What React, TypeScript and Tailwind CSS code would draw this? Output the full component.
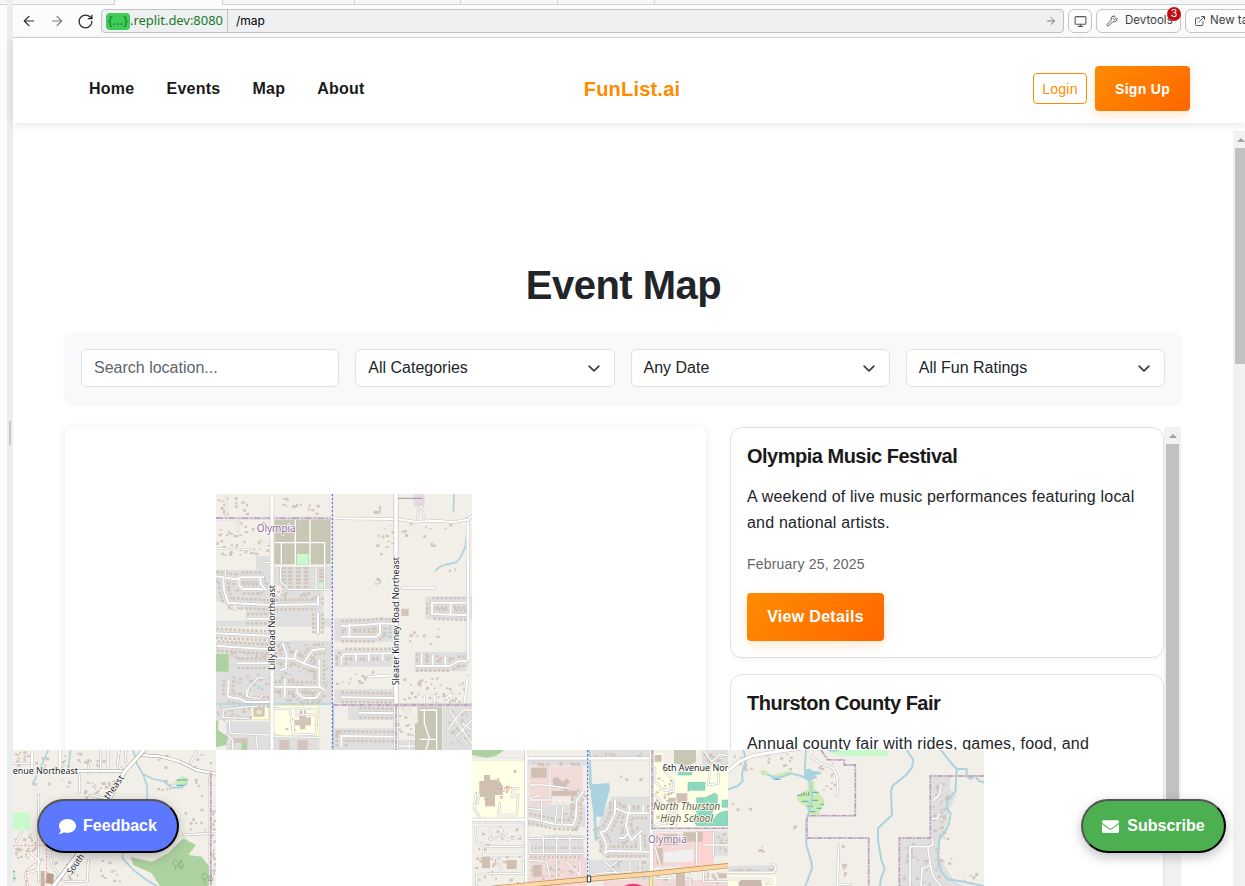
import React from "react";
import { FaComment, FaEnvelope } from "react-icons/fa";
import { ArrowLeft, ArrowRight, ExternalLink, Monitor, RotateCw, Wrench } from "lucide-react";

/* ---------- map drawing helpers ---------- */

const LAND = "#f2efe9";
const RES = "#dfdfdf";
const HOUSE = "#d3c5ba";
const WATER = "#aad3df";

function scatter(x: number, y: number, w: number, h: number, n: number, seed: number) {
  let s = seed * 7919 + 13;
  const rnd = () => {
    s = (s * 1103515245 + 12345) % 2147483648;
    return s / 2147483648;
  };
  let d = "";
  for (let i = 0; i < n; i++) {
    const px = Math.round(x + rnd() * w);
    const py = Math.round(y + rnd() * h);
    const bw = Math.round(4 + rnd() * 6);
    const bh = Math.round(4 + rnd() * 5);
    d += `M${px} ${py}h${bw}v${bh}h-${bw}z`;
  }
  return d;
}

type Box = [number, number, number, number, number];

function Houses({ areas, fill = HOUSE }: { areas: Box[]; fill?: string }) {
  return <path fill={fill} d={areas.map((a, i) => scatter(a[0], a[1], a[2], a[3], a[4], i + 3)).join("")} />;
}

/* A row of houses on each side of the given streets. */
function HouseRows({ d, bg = RES }: { d: string; bg?: string }) {
  return (
    <g fill="none">
      <path d={d} stroke={HOUSE} strokeWidth="36" strokeDasharray="8 5" />
      <path d={d} stroke={bg} strokeWidth="20" strokeLinejoin="round" />
    </g>
  );
}

function Roads({ d, w = 6, edge = "#c4c1be" }: { d: string; w?: number; edge?: string }) {
  return (
    <g fill="none" strokeLinejoin="round" strokeLinecap="round">
      <path d={d} stroke={edge} strokeWidth={w + 3} />
      <path d={d} stroke="#fff" strokeWidth={w} />
    </g>
  );
}

function Border({ d, dash = "14 4 4 4" }: { d: string; dash?: string }) {
  return (
    <g fill="none">
      <path d={d} stroke="#dfd0de" strokeWidth="6" />
      <path d={d} stroke="#b79bb8" strokeWidth="4" strokeDasharray={dash} />
    </g>
  );
}

function BlueDots({ d }: { d: string }) {
  return <path d={d} fill="none" stroke="#5757e6" strokeWidth="3" strokeDasharray="7 5" />;
}

function River({ d, w = 5 }: { d: string; w?: number }) {
  return <path d={d} fill="none" stroke={WATER} strokeWidth={w} strokeLinejoin="round" strokeLinecap="round" />;
}

const label = "[font-family:'Noto_Sans','Open_Sans',sans-serif]";

/* ---------- map tiles ---------- */

function TileNorth() {
  const streets =
    "M0 259L22 262L60 268L72 262L142 262M22 262L24 300L36 338L160 345L300 343M68 264V286L80 297H136L140 300M132 264L136 285L150 300M56 340V358M92 386H160M306 322V346M306 370V430M0 430L120 436L165 438M4 468L165 478M64 520L165 520M176 504L234 506L262 520L310 535M234 506L242 480M262 520L290 480L325 476M310 510V590L325 600M176 590L310 592M206 568V622M244 592V610L262 624L300 624L312 608M200 460L212 495L210 535L195 540M38 570L36 620L70 626L90 636H160";
  const east =
    "M376 407L440 405L500 400L532 402M400 402V440M376 440L480 440L492 430V405M376 525V505L385 491L532 490M420 492V512M458 492V512M500 492V512M376 622L535 624M430 668L535 670M376 770V738L535 740M600 528L700 528L725 514L755 514M617 490V528M650 496V528M688 502V528M648 338L755 338M648 338V372L755 376M704 340V374";
  const lanes = "M458 560L535 556M557 295L655 295M625 620V640M655 616V640M690 625L705 612V625M745 640L755 560";
  return (
    <svg viewBox="0 12 768 768" className="absolute left-[151px] top-[67px] h-[256px] w-[256px]">
      <rect y="12" width="768" height="768" fill={LAND} />
      <path
        fill={RES}
        d="M0 240H120V198H165V240L175 228H348V300H322V385H348V640H0V545H38V492H0V455H160V410H0V362H90V335H0ZM356 385H530V455H356ZM356 478H530V530H356ZM356 598H532V640H356ZM396 648H535V690H396ZM356 715H532V780H356ZM597 486H752V543H597ZM628 320H768V388H628ZM680 652H768V780H680ZM540 750H600V780H540ZM0 645H165V690H0ZM30 695H165V780H30ZM170 738H310V780H170Z"
      />
      <path fill={LAND} d="M172 410H345V452H172ZM0 362H90V392H0ZM180 285L200 290V318H178Z" />
      <path fill="#c8c7b4" d="M175 86H344V222H175ZM605 652H678V780H597V700H605Z" />
      <path fill="#c8facc" d="M242 192H278V224H242ZM200 280l14 0v12h-14zM308 281h14v12h-14z" />
      <path fill="#aed1a0" d="M0 492H38V545H0ZM0 690L8 692L6 720L36 740L30 765L0 772ZM76 750H94V780H76Z" />
      <path fill="#ffffe5" stroke="#f1eca8" strokeWidth="3" d="M106 646H158V688H106ZM172 646H310V738H200L172 728Z" />
      <path fill="#e6d9e6" d="M592 12H626V50H592Z" />
      <HouseRows d={streets} />
      <HouseRows d={east} />
      <Houses
        areas={[
          [0, 20, 100, 56, 16], [0, 95, 155, 100, 44], [185, 20, 120, 52, 14], [472, 48, 30, 24, 6], [478, 90, 60, 110, 14],
          [555, 90, 160, 50, 9], [640, 155, 14, 20, 3], [470, 255, 30, 30, 4], [560, 560, 190, 80, 48], [545, 660, 45, 80, 10],
          [356, 535, 130, 50, 12], [550, 400, 120, 70, 9], [690, 200, 60, 60, 3], [200, 700, 100, 20, 3],
          [180, 455, 160, 185, 45], [10, 480, 150, 30, 22], [45, 545, 115, 60, 20], [0, 645, 100, 45, 18], [690, 655, 75, 115, 26],
          [170, 300, 150, 20, 16],
        ]}
      />
      <path
        d="M204 232V296M222 232V296M247 232V296M270 232V296M316 236V280"
        stroke={HOUSE}
        strokeWidth="14"
        strokeDasharray="7 4"
        fill="none"
      />
      <path fill={HOUSE} d="M112 652H146V680H112ZM236 690H250V662H270V682H285V706H268V718H252V706H236ZM556 356H578V378H556ZM190 750H220V780H190ZM245 750H275V780H245ZM48 745H95V758H48Z" />
      <path fill="#eee6c9" d="M122 660H136V672H122Z" />
      <River d="M714 14L712 66" />
      <River d="M752 130L748 170L735 200L722 217L690 223L672 230L659 242" />
      <River d="M0 642H350M352 642V780" />
      <path d="M514 428h14M514 440h14M520 405h8" stroke={WATER} strokeWidth="5" />
      <path fill="#bfe3d2" d="M122 585h12v10h-12z" />
      <Roads d={streets} w={6} />
      <Roads d={east} w={6} />
      <Roads d={lanes} w={6} />
      <Roads
        w={4}
        d="M196 160V225M238 86V226M282 86V226M176 158H326V298M176 228H326M194 230V275L218 298H345M300 232V296M30 20V82M66 88V124M0 176L104 178M135 162H165M140 218H165M28 270V242M120 650L95 650L24 658L20 682L100 686M40 690L42 730L160 735M176 655L222 658L232 735M232 690V735L300 732L304 658L236 656M240 658V676L300 672M262 658V672M35 735L50 750V780M120 738L125 780M170 740L310 742M603 84L606 60L615 46L625 84M700 660L725 700L768 760M720 740L768 690M695 720L740 660H768M740 700L768 720M612 660H662V780M612 748H662M625 662V700L640 745L630 780M560 655L575 668L582 658M545 768H595M580 755V780M90 620L100 590L125 565L148 562M90 590L95 620L130 626L140 615"
      />
      <Roads d="M755 86V200L757 330V510" w={7} />
      <path d="M537 25H620" stroke="#999" strokeWidth="3" />
      <Roads d="M0 86L345 85L440 86L540 87L600 95L665 92L710 97L755 89L768 78" w={6} />
      <Border d="M0 84L345 85" dash="20 8 4 6" />
      <Roads d="M168 12V780" w={10} />
      <Roads d="M540 12V780" w={11} edge="#b5b2b0" />
      <Roads d="M540 645H768" w={7} />
      <Border d="M352 645H768" />
      <Border d="M540 645V780" />
      <BlueDots d="M349 12V780" />
      <g className={label} stroke="#fff" strokeWidth="5" paintOrder="stroke" strokeLinejoin="round">
        <text x="122" y="127" fontSize="31" fill="#8d6a91" textLength="117" lengthAdjust="spacingAndGlyphs">Olympia</text>
        <g fill="#222">
          <text transform="translate(177 540) rotate(-90)" fontSize="27" textLength="255" lengthAdjust="spacingAndGlyphs">Lilly Road Northeast</text>
          <text transform="translate(550 586) rotate(-90)" fontSize="27" textLength="385" lengthAdjust="spacingAndGlyphs">Sleater Kinney Road Northeast</text>
        </g>
      </g>
    </svg>
  );
}

function TileWest() {
  return (
    <svg viewBox="39 15 609 408" preserveAspectRatio="none" className="h-[136px] w-[203px] shrink-0">
      <rect x="39" y="15" width="609" height="408" fill={LAND} />
      <path fill="#c8facc" d="M39 202H90V255H39Z" />
      <path fill="#aed1a0" d="M392 336L455 350L505 325L550 280L588 300L565 330L605 335L635 375L625 423H480L455 385L400 360Z" />
      <path fill="#cdebb0" d="M525 108L545 94L563 98L562 118L545 130L528 122ZM39 372L46 380V405L39 412Z" />
      <path d="M530 105h14M545 105h18M530 121h22M39 380h6M39 400h8" stroke="#4ba3e0" strokeWidth="3" />
      <Houses
        areas={[
          [42, 18, 50, 50, 12], [105, 18, 100, 52, 15], [220, 18, 90, 60, 14], [42, 265, 90, 75, 34], [40, 95, 200, 45, 5],
          [250, 95, 60, 70, 14], [440, 20, 190, 45, 10], [470, 85, 60, 60, 7], [570, 85, 60, 90, 6], [300, 330, 60, 85, 10],
          [150, 330, 100, 85, 16], [545, 190, 95, 85, 12], [635, 180, 10, 230, 16], [280, 100, 60, 60, 10],
        ]}
      />
      <path fill="#b79d8a" d="M140 383L162 388L158 418L136 413Z" />
      <path fill="#c7b3a5" d="M122 378H134V423H122Z" />
      <River d="M145 15L125 60L98 118" />
      <River d="M212 15L206 60L200 78" />
      <River d="M400 15L410 55L430 90L442 125L441 180M430 88L460 102L490 108L515 128L545 128L560 115M368 322V340L400 375L440 405L470 423" />
      <Roads w={5} edge="#b8b5b2" d="M302 15V78M324 15V78M265 60V85M358 15L352 60L370 78M378 15L376 50M239 90V142M39 55H95M590 20L568 60M550 270L625 265M116 150V410M92 322L118 350L112 375L75 385L82 423M150 320L155 360L185 400M265 345L262 408L195 410M50 290L65 262M270 150L320 160" />
      <Roads d="M96 15V80M180 15V80" w={8} />
      <Roads d="M39 78L370 78" w={8} edge="#a9a6a3" />
      <Roads d="M420 30L480 34L535 48L590 75L648 86" w={7} edge="#9b9895" />
      <Roads d="M432 15L372 82L240 320L160 423" w={10} edge="#9b9895" />
      <Roads d="M636 180H648M636 260H648M636 370H648M630 85V423" w={5} />
      <path d="M39 302H140V420M80 423L78 375L112 350" fill="none" stroke="#f0a49b" strokeWidth="3" strokeDasharray="7 4" />
      <Border d="M632 85V423" />
      <g fill="none" stroke="#86ab79" strokeWidth="2.5">
        <path d="M527 375V362M527 345a8 9 0 1 0 .1 0M543 375V366M543 345l-7 21h14zM614 415V402M614 385a8 9 0 1 0 .1 0M632 415V406M632 387l-7 19h14z" />
      </g>
      <g className={label} fill="#222" stroke="#fff" strokeWidth="5" paintOrder="stroke" strokeLinejoin="round" fontSize="27">
        <text x="38" y="87" textLength="196" lengthAdjust="spacingAndGlyphs">enue Northeast</text>
        <text transform="translate(325 165) rotate(-54)" textLength="82" lengthAdjust="spacingAndGlyphs">theast</text>
        <text transform="translate(214 390) rotate(-54)" textLength="68" lengthAdjust="spacingAndGlyphs">South</text>
      </g>
    </svg>
  );
}

function TileCenter() {
  const res =
    "M404 325L410 300L392 262L410 255L435 205V165M437 190L475 205H535M475 205L468 240L475 265L460 280L448 278M475 265L485 285L505 265L515 258M510 270L512 315M404 325L415 318L535 320M478 180V205M520 180V205M176 220L215 228L255 238L310 240L318 215L320 165L340 140";
  return (
    <svg viewBox="6 15 768 408" className="h-[136px] w-[256px] shrink-0">
      <rect x="6" y="15" width="768" height="408" fill={LAND} />
      <path fill={RES} d="M175 180H345V245H175ZM175 40H352V62H175ZM365 15H540V45H365ZM425 155H540V340H405L388 320V230ZM230 270H340V332H176V290H230ZM695 15H774V60H695ZM350 345H540V390H350ZM730 262H774V332H730ZM480 385H550V423H480Z" />
      <path fill="#f2dad9" d="M178 65H338V132L310 155H245V182H178ZM178 335H350V400H178ZM550 265H680V365H550ZM680 255H730V360H680ZM176 400H350V423H176ZM400 405H774V423H400Z" />
      <path fill="#ffd3d1" d="M552 265H580V360L552 370ZM682 265H730V360H682ZM640 352H690V366H640Z" />
      <path fill="#f0f0f0" d="M582 322L670 312V350H582Z" />
      <path fill="#ffffe5" d="M6 42H162V218H6ZM550 25H580V60L620 95L680 62H774V250H550Z" />
      <path fill="#aed1a0" d="M6 15H102L80 32L50 38L6 30Z" />
      <path fill="#c8c7b4" d="M612 15H678V52L650 62L612 55Z" />
      <path fill="#8dd9c0" stroke="#6cc7a8" strokeWidth="1.5" d="M654 112H705V136H654ZM680 158H705L735 144L742 150V180L725 205L735 242H680L668 225V210H680ZM756 165H774V187H756ZM774 198C745 198 730 215 730 238L735 242H774ZM625 82h40v8h-40z" />
      <path fill={WATER} d="M364 118L418 114L420 130L398 215H372L362 150Z" />
      <HouseRows d={res} />
      <HouseRows d="M180 295H338M180 322H338" />
      <Houses
        areas={[
          [178, 50, 160, 8, 18], [372, 18, 160, 20, 18], [440, 90, 70, 20, 3], [12, 240, 145, 170, 46], [180, 345, 155, 60, 26],
          [555, 60, 50, 180, 22], [400, 345, 130, 50, 20], [595, 130, 60, 50, 12], [700, 22, 70, 32, 14], [560, 370, 110, 40, 14],
          [20, 55, 130, 140, 8], [740, 265, 32, 60, 14], [700, 380, 70, 35, 10], [280, 170, 40, 50, 8],
        ]}
      />
      <path
        fill="#d0bfb3"
        d="M28 108H42V90H60V104H86L98 122V150H75V184H45V156H28ZM184 68H230V98H184ZM248 100L262 96L278 112L290 100L300 110L288 122L300 134L285 140L270 124L250 130ZM245 138H322V152H245ZM580 268H622V300H580ZM640 262H698V290H640ZM595 158H618V180H595ZM622 145H652V172H622ZM36 335H60V370H36ZM110 345H140V372H110ZM188 360H215V395H188ZM560 310H578V358H560ZM618 385H645V423H618ZM554 30H575V50H554ZM745 385H770V400H745Z"
      />
      <path d="M94 132L125 124M100 140L125 128M562 145L576 125" stroke="#e8705f" strokeWidth="3" strokeDasharray="4 4" fill="none" />
      <River d="M358 15L362 130M374 210L378 284" w={8} />
      <Roads d={res} w={6} />
      <Roads
        w={4}
        d="M6 42H162M18 145L12 190L28 215M28 150L22 175M90 175L85 210H140L145 150L125 155L130 130H145M6 240H160M15 245L20 290L50 305H160M60 240V285L100 270M100 240L110 285L150 275M40 315V330H160M20 388V423M20 388L90 385V340M90 385H160V350M178 165H240V65M215 168V228M180 290V325H340M180 160L210 150M220 272V330M260 272V330M300 272V330M178 280H340M260 340V400M290 350L330 390M178 345L230 350L240 400M330 345V400M178 120H220L300 130M262 175L255 235M280 175L275 235M176 190L215 195M400 345L440 385M440 350L405 380M480 345V385M510 345V385M380 385L480 380M555 70V110L580 135L612 140M580 75L610 105V130L590 132M555 150L600 200L560 240M555 240L600 232L620 175M620 195V240M700 15L725 50L750 28L774 32M720 65L715 120L745 115V85M555 305L575 375M590 305M680 262V360M730 262V332M625 275L590 280M700 300H774M560 385L600 375V415M560 400H610M660 385V423M700 375V410H774"
      />
      <Roads d="M169 15V423M6 224H162M175 40H540" w={8} />
      <Roads d="M544 15V395" w={11} />
      <Roads d="M550 255H774" w={4} />
      <Border d="M546 15V250H774" />
      <Roads d="M353 350V398" w={8} />
      <BlueDots d="M353 15V400" />
      <path d="M543 395V423" stroke="#b9b36a" strokeWidth="13" />
      <path d="M543 395V423" stroke="#f3f0a0" strokeWidth="9" />
      <path d="M66 430L360 402L545 386L774 362" fill="none" stroke="#b98a45" strokeWidth="16" />
      <path d="M66 430L360 402L545 386L774 362" fill="none" stroke="#fcd6a4" strokeWidth="12" />
      <path d="M352 393h10v18h-10z" fill="#fff" stroke="#333" strokeWidth="3" />
      <path d="M462 423Q490 410 518 423Z" fill="#e8407d" />
      <g className={label} stroke="#fff" strokeWidth="5" paintOrder="stroke" strokeLinejoin="round">
        <text x="578" y="78" fontSize="27" fill="#222" textLength="197" lengthAdjust="spacingAndGlyphs">6th Avenue Nor</text>
        <g fill="#5f6033" fontSize="30" fontStyle="italic">
          <text x="549" y="196" textLength="202" lengthAdjust="spacingAndGlyphs">North Thurston</text>
          <text x="571" y="231" textLength="158" lengthAdjust="spacingAndGlyphs">High School</text>
        </g>
        <text x="534" y="294" fontSize="31" fill="#8d6a91" textLength="116" lengthAdjust="spacingAndGlyphs">Olympia</text>
      </g>
    </svg>
  );
}

function TileEast() {
  return (
    <svg viewBox="6 15 768 408" className="h-[136px] w-[256px] shrink-0">
      <rect x="6" y="15" width="768" height="408" fill={LAND} />
      <path fill={RES} d="M614 95H675L672 130L690 150L672 190L660 240L640 290V340L680 400L710 423H520V280H614ZM6 363L150 360V385H6Z" />
      <path fill="#c8facc" d="M305 15H483V33H340L310 22Z" />
      <path fill="#ffffe5" d="M6 392H150V423H6Z" />
      <path fill="#c9b9ad" d="M38 410L48 404H105L108 423H38Z" />
      <path fill="#cdebb0" d="M102 80L112 74L124 80L120 90L108 92ZM135 92L165 84L190 78L200 86L165 100L140 104ZM212 152L245 135V112L265 108V130L292 160L296 175L278 210L250 212L240 185L215 168Z" />
      <path fill={WATER} d="M233 95L236 75L248 70L262 78L286 80L284 88L268 90L266 100L252 110L240 105ZM304 15L335 15V20L312 20Z" />
      <path d="M214 151h12M228 169h20M258 142h20M258 166h18M243 184h18M272 190h14M248 200h20M284 178h10M138 99h20M146 103h18" stroke="#4ba3e0" strokeWidth="3" />
      <path d="M228 152v-8M234 152v-12M241 152v-8M248 152v-12" stroke="#68a06a" strokeWidth="3" />
      <Houses
        areas={[
          [10, 25, 200, 50, 20], [265, 25, 60, 110, 12], [10, 170, 60, 40, 4], [200, 238, 12, 10, 3], [90, 300, 24, 30, 4],
          [620, 110, 45, 170, 36], [525, 290, 90, 125, 34], [10, 370, 135, 10, 30], [345, 345, 14, 60, 7], [640, 300, 40, 60, 4],
          [705, 380, 50, 30, 4], [340, 295, 12, 10, 2], [625, 300, 20, 110, 10],
        ]}
      />
      <River d="M52 15L60 45L48 85L50 108L35 123L6 134" w={6} />
      <River d="M240 15L236 75M124 88L145 98L170 95L195 85L225 93L245 102L254 115L258 160L248 205L240 230L241 300L256 350L258 370L238 423" w={6} />
      <River d="M542 15L562 45L558 68L540 90L500 122L495 140L498 210L456 250V285L466 345L476 372L465 400L462 423" w={6} />
      <River d="M645 15L672 50L692 72H722V95L735 102L745 92L760 108L774 112M692 72L690 110L688 140L665 165L662 190L674 205L668 240L640 285L636 330L645 380L665 403L700 408L774 423" w={6} />
      <Roads d="M254 15L258 38L290 58L320 68L332 90L336 125L331 152M338 300L334 423M334 418H375M645 118L640 150L620 167M640 205L635 220L618 222M552 423V305H610L622 298L618 282M605 305L615 370L622 395L645 423M585 423L588 370L612 362M6 382H145L150 362L140 358M6 402H135V415H120" w={5} />
      <Roads d="M6 78L40 50L80 32L150 20L240 8" w={9} />
      <Border d="M285 15L305 44L355 45V60H388V212H243V279H428V423M774 93H613V279H520V423" dash="16 5 5 5" />
    </svg>
  );
}

/* ---------- page parts ---------- */

function BrowserBar() {
  const iconBtn = "flex h-6 shrink-0 items-center rounded-md border border-[#c2c4c5] bg-[#fcfcfc]";
  const tab = "shrink-0 border-b border-l border-[#d0d3d1] bg-[#f4f7f5]";
  return (
    <div className="flex h-[38px] flex-col border-b border-[#d4d5d6] bg-[#fcfcfc]">
      <div className="flex h-[5px]">
        <div className="w-[102px] border-r border-b border-[#d0d3d1] bg-[#f4f7f5]" />
        <div className="w-[107px]" />
        <div className={`${tab} w-[132px]`} />
        <div className={`${tab} w-[106px]`} />
        <div className={`${tab} w-[97px]`} />
        <div className={`${tab} w-[97px]`} />
        <div className="flex-1 border-b border-l border-[#d0d3d1] bg-[#f4f7f5]" />
      </div>
      <div className="flex items-center overflow-hidden pt-[4px] pl-2 font-['Inter',sans-serif]">
        <ArrowLeft className="h-[16px] w-[16px] shrink-0 text-[#26282b]" strokeWidth={1.8} />
        <ArrowRight className="ml-[12px] h-[16px] w-[16px] shrink-0 text-[#797c80]" strokeWidth={1.8} />
        <RotateCw className="ml-[12px] h-[17px] w-[17px] shrink-0 text-[#26282b]" strokeWidth={1.8} />
        <div className="ml-[7px] flex h-6 w-[963px] shrink-0 items-center rounded-[4px] border border-[#bfc1c2] bg-[#eff0f2]">
          <div className="flex h-full w-[126px] items-center border-r border-[#bfc1c2] pl-1 font-['Noto_Sans',sans-serif] text-[13px] text-[#187a2a]">
            <span className="flex h-[17px] w-6 items-center justify-center rounded-[4px] bg-[#3ecb57]">{"{...}"}</span>
            <span className="tracking-[-0.05px]">.replit.dev:8080</span>
          </div>
          <span className="flex-1 pl-2 text-[12px] text-black">/map</span>
          <ArrowRight className="mr-[6px] h-3 w-3 text-[#777a7d]" strokeWidth={2} />
        </div>
        <div className={`${iconBtn} ml-[4px] w-6 justify-center`}>
          <Monitor className="h-[13px] w-[13px] text-[#55585c]" />
        </div>
        <div className={`${iconBtn} relative ml-[4px] w-[85px] pl-[9px] text-[11.5px] text-[#3b3f45]`}>
          <Wrench className="mr-[7px] h-[12px] w-[12px] shrink-0 text-[#55585c]" />
          Devtools
        </div>
        <div className={`${iconBtn} ml-[4px] w-[90px] pl-2 text-[11.5px] whitespace-nowrap text-[#3b3f45]`}>
          <ExternalLink className="mr-1 h-[12px] w-[12px] shrink-0 text-[#55585c]" />
          New tab
        </div>
      </div>
      <span className="absolute top-[7px] left-[1167px] flex h-[14px] w-[14px] items-center justify-center rounded-full bg-[#c40d12] font-['Inter',sans-serif] text-[10.5px] text-white">
        3
      </span>
    </div>
  );
}

function SiteHeader() {
  return (
    <header className="relative z-10 grid h-[85px] grid-cols-[1fr_auto_1fr] items-center bg-white pt-4 pr-[55px] pl-[76px] shadow-[0_2px_10px_rgba(0,0,0,0.1)]">
      <nav className="flex gap-8 text-base font-bold tracking-[0.25px] text-[#1a1a1a]">
        <a>Home</a>
        <a>Events</a>
        <a>Map</a>
        <a>About</a>
      </nav>
      <a className="mr-[14px] -ml-[1px] text-[20px] font-bold tracking-[0.2px] text-[#ff8c00]">FunList.ai</a>
      <div className="flex items-center justify-end gap-2 text-sm tracking-[0.3px]">
        <button className="h-[31px] w-[54px] rounded-[4px] border border-[#ff8c00] tracking-[0.2px] text-[#ff8c00]">Login</button>
        <button className="h-[45px] w-[95px] rounded-[4px] bg-linear-[135deg,#ff8c00,#ff6600] font-bold tracking-[0.3px] text-white shadow-[0_4px_12px_rgba(255,140,0,0.2)]">
          Sign Up
        </button>
      </div>
    </header>
  );
}

function Select({ text }: { text: string }) {
  return (
    <div className="flex h-[38px] flex-1 items-center justify-between rounded-md border border-[#dee2e6] bg-white pr-[13px] pl-3 text-base text-[#212529]">
      {text}
      <svg viewBox="0 0 16 16" className="h-[14px] w-[14px] pt-px" fill="none" stroke="#343a40" strokeWidth="2" strokeLinecap="round" strokeLinejoin="round">
        <path d="m2 5 6 6 6-6" />
      </svg>
    </div>
  );
}

function EventCard({ title, text, date }: { title: string; text: string; date?: string }) {
  return (
    <article className="h-[231px] shrink-0 rounded-xl border border-[#dee2e6] bg-white px-4 pt-4 shadow-[0_2px_4px_rgba(0,0,0,0.05)]">
      <h2 className="text-[20px] leading-6 font-bold tracking-[-0.5px] text-[#1a1a1a]">{title}</h2>
      <p className="mt-4 text-base leading-[26px] tracking-[0.2px] text-[#212529]">{text}</p>
      {date && (
        <>
          <p className="mt-[18px] text-[14px] leading-[21px] tracking-[0.2px] text-[#666]">{date}</p>
          <button className="mt-[18px] h-12 w-[137px] rounded-[4px] bg-linear-[135deg,#ff8c00,#ff6600] text-base font-bold tracking-[0.3px] text-white shadow-[0_4px_12px_rgba(255,140,0,0.2)]">
            View Details
          </button>
        </>
      )}
    </article>
  );
}

function UpArrow({ className }: { className: string }) {
  return (
    <svg viewBox="0 0 8 4" className={className}>
      <path d="M4 0 8 4H0z" fill="#a0a0a0" />
    </svg>
  );
}

export default function App() {
  const pill =
    "absolute top-[799px] flex h-[54px] items-center justify-center rounded-full border-2 border-t-[#555] border-l-[#555] border-r-black border-b-black text-base font-bold text-white shadow-[0_4px_12px_rgba(0,0,0,0.25)]";
  return (
    <div className="relative flex h-[886px] w-[1245px] overflow-hidden bg-white font-['Liberation_Sans',Arial,sans-serif]">
      <div className="flex w-[13px] shrink-0">
        <div className="w-[7px] bg-[#fcfcfc]">
          <div className="h-[5px] border-b border-[#d0d3d1] bg-[#f4f7f5]" />
        </div>
        <div className="flex w-[6px] items-start justify-center bg-[#ebecee] pt-[421px]">
          <div className="h-6 w-[2px] bg-[#c5c8cb]" />
        </div>
      </div>

      <div className="flex min-w-0 flex-1 flex-col">
        <BrowserBar />
        <SiteHeader />

        <div className="flex min-h-0 flex-1">
          <main className="flex w-[1220px] flex-col px-[52px] pt-[132px]">
            <h1 className="pl-[1px] text-center text-[40px] leading-[60px] font-bold tracking-[-0.5px] text-[#212529]">Event Map</h1>

            <div className="mt-[18px] flex h-[70px] w-[1116px] shrink-0 gap-4 rounded-lg bg-[#f8f9fb] p-4 shadow-[0_2px_4px_rgba(0,0,0,0.05)]">
              <input
                className="h-[38px] w-0 min-w-0 flex-1 rounded-md border border-[#dee2e6] bg-white px-3 text-base placeholder:text-[#5f656b]"
                placeholder="Search location..."
              />
              <Select text="All Categories" />
              <Select text="Any Date" />
              <Select text="All Fun Ratings" />
            </div>

            <div className="mt-6 flex h-[459px] w-[1116px] shrink-0">
              <section className="relative w-[641px] shrink-0 rounded-lg bg-white shadow-[0_2px_10px_rgba(0,0,0,0.1)]">
                <TileNorth />
              </section>
              <section className="ml-6 flex w-[434px] shrink-0 flex-col gap-4 overflow-hidden">
                <EventCard
                  title="Olympia Music Festival"
                  text="A weekend of live music performances featuring local and national artists."
                  date="February 25, 2025"
                />
                <EventCard title="Thurston County Fair" text="Annual county fair with rides, games, food, and" />
              </section>
              <div className="flex w-[17px] flex-col items-center bg-[#f1f1f1]">
                <UpArrow className="mt-[7px] h-1 w-2" />
                <div className="mt-[6px] h-[390px] w-[13px] bg-[#c1c1c1]" />
              </div>
            </div>
          </main>
          <div className="mt-2 flex flex-1 flex-col items-end bg-[#f1f1f1]">
            <UpArrow className="mt-[7px] h-1 w-2" />
            <div className="mt-[6px] h-[216px] w-[10px] bg-[#c1c1c1]" />
          </div>
        </div>
      </div>

      <div className="absolute top-[750px] left-[13px] flex">
        <TileWest />
        <div className="w-[256px] shrink-0 bg-white" />
        <TileCenter />
        <TileEast />
      </div>

      <button className={`${pill} left-[37px] w-[142px] gap-[7px] bg-[#5b78ff]`}>
        <FaComment className="h-[17px] w-[17px]" />
        Feedback
      </button>
      <button className={`${pill} left-[1081px] w-[145px] gap-[8px] bg-[#4caf50]`}>
        <FaEnvelope className="h-[17px] w-[17px]" />
        Subscribe
      </button>
    </div>
  );
}
